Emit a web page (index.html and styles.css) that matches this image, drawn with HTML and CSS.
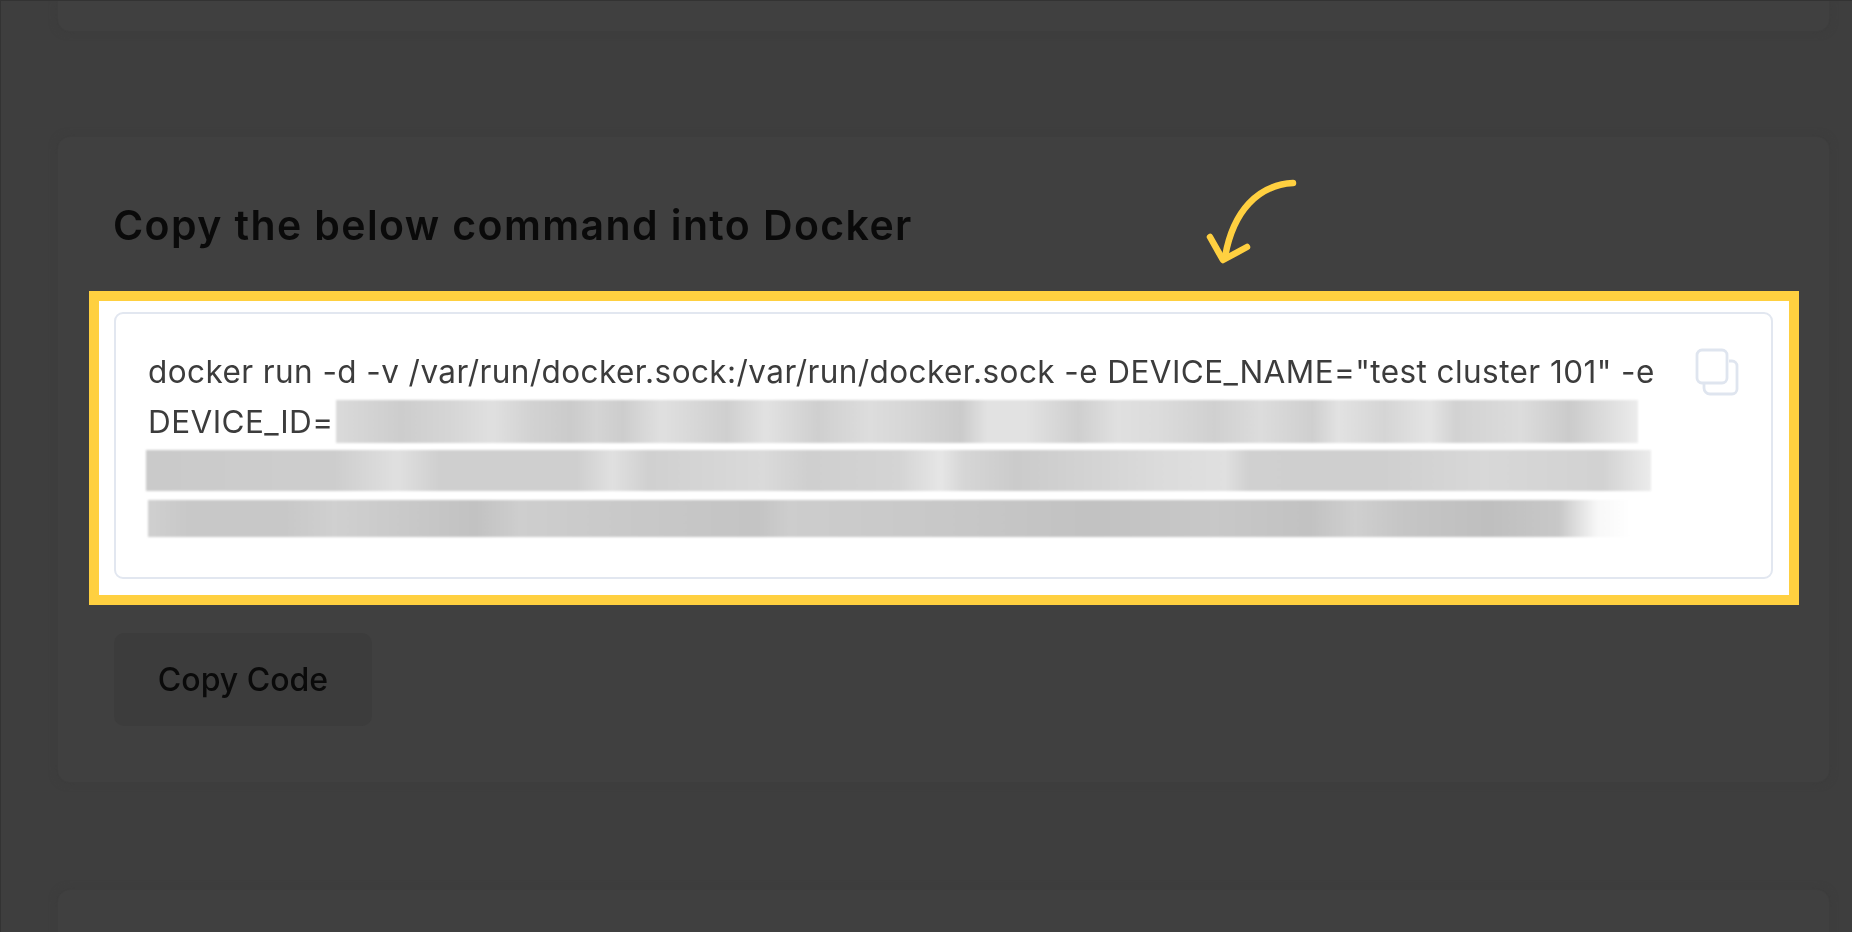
FILE: index.html
```html
<!DOCTYPE html>
<html lang="en">
<head>
<meta charset="utf-8">
<title>Copy the below command into Docker</title>
<link rel="stylesheet" href="styles.css">
</head>
<body>
<div class="page">
  <section class="card card-top"></section>
  <section class="card card-main">
    <h2 class="heading">Copy the below command into Docker</h2>
    <div class="highlight">
      <div class="code-box">
        <div class="code-lines">
          <div class="code-line">docker run -d -v /var/run/docker.sock:/var/run/docker.sock -e DEVICE_NAME="test cluster 101" -e</div>
          <div class="code-row">
            <span class="code-label">DEVICE_ID=</span>
            <span class="redact redact-a"></span>
          </div>
          <div class="redact redact-b"></div>
          <div class="redact redact-c"></div>
        </div>
        <svg class="copy-icon" width="44" height="48" viewBox="0 0 44 48" fill="none" stroke="#dfe5ef" stroke-width="2.8">
          <path d="M9 36v4a6 6 0 0 0 6 6h22a5 5 0 0 0 5-5V18a5 5 0 0 0-5-5h-3"/>
          <rect x="2" y="2" width="30" height="33" rx="5" fill="#fff"/>
        </svg>
      </div>
    </div>
    <button class="copy-button" type="button">Copy Code</button>
  </section>
  <section class="card card-bottom"></section>
  <svg class="arrow" width="100" height="100" viewBox="0 0 100 100" fill="none" stroke="#ffd040" stroke-width="6.5" stroke-linecap="round" stroke-linejoin="round">
    <path d="M93 8C58 10 33 36 25 82"/>
    <path d="M10 62L23 85L47 72"/>
  </svg>
</div>
</body>
</html>
```

FILE: styles.css
```css
* { box-sizing: border-box; }
html, body { margin: 0; padding: 0; height: 100%; overflow: hidden; background: #3e3e3e; }
.page {
  position: relative;
  width: 1852px;
  height: 932px;
  overflow: hidden;
  display: flex;
  flex-direction: column;
  padding: 0 23px 0 58px;
  background: #3e3e3e;
}
.page::after {
  content: "";
  position: absolute;
  inset: 0;
  box-shadow: inset 1px 1px 0 #333;
  pointer-events: none;
}
.card {
  flex: none;
  background: #404040;
  border-radius: 12px;
  box-shadow: 0 0 0 1px #3d3d3d, 0 0 8px #3c3c3c;
}
.card-top { height: 31px; border-radius: 0 0 12px 12px; }
.card-main {
  height: 645px;
  margin-top: 106px;
  padding: 64px 54px 0 55px;
  display: flex;
  flex-direction: column;
  align-items: flex-start;
}
.card-bottom { height: 60px; margin-top: 108px; }
.heading {
  margin: 0;
  height: 90px;
  font: 600 41px/48px "Inter", "Liberation Sans", sans-serif;
  letter-spacing: 1.4px;
  color: #0a0a0a;
  filter: blur(.7px);
}
.highlight {
  align-self: stretch;
  margin: 0 -24px 0 -24px;
  height: 314px;
  border: 10px solid #ffd040;
  background: #fff;
  padding: 11px 16px 16px 15px;
}
.code-box {
  height: 267px;
  border: 2.5px solid #e2e7f0;
  border-radius: 9px;
  padding: 33px 0 0 32px;
  display: flex;
  align-items: flex-start;
  background: #fff;
}
.code-lines {
  width: 1508px;
  flex: none;
  display: flex;
  flex-direction: column;
  align-items: flex-start;
  color: #3c3c3c;
  font: 400 31.5px/50px "Inter", "Liberation Sans", sans-serif;
  letter-spacing: 0.42px;
  filter: blur(.6px);
}
.code-line { white-space: nowrap; height: 53px; }
.code-row { display: flex; height: 50px; align-items: flex-start; }
.code-label { width: 188px; line-height: 44px; white-space: nowrap; }
.redact { display: block; filter: blur(.8px); }
.redact-a {
  width: 1302px;
  height: 43px;
  background: linear-gradient(90deg, #dadada 0, #cdcdcd 5%, #d6d6d6 9%, #e0e0e0 12%, #d2d2d2 15%, #cbcbcb 18%, #d4d4d4 20%, #cdcdcd 22%, #e0e0e0 25%, #cfcfcf 30%, #e2e2e2 33%, #cfcfcf 37%, #dddddd 41%, #d6d6d6 44%, #cbcbcb 48%, #e2e2e2 50%, #e2e2e2 53%, #cfcfcf 57%, #e0e0e0 60%, #dcdcdc 63%, #d0d0d0 67.5%, #dcdcdc 71%, #cfcfcf 75%, #e2e2e2 77%, #d5d5d5 80.5%, #e4e4e4 84%, #d2d2d2 86%, #dcdcdc 91%, #cbcbcb 94.7%, #ececec 100%);
}
.redact-b {
  width: 1505px;
  height: 41px;
  margin-left: -2px;
  background: linear-gradient(90deg, #cacaca 0, #cdcdcd 9%, #cdcdcd 12.5%, #e0e0e0 16.7%, #cfcfcf 19.5%, #cfcfcf 28.6%, #e0e0e0 31%, #d0d0d0 33.4%, #dadada 41%, #cfcfcf 44%, #d4d4d4 50%, #e6e6e6 52.8%, #d6d6d6 54.3%, #cbcbcb 57.8%, #dcdcdc 67.8%, #e0e0e0 71.7%, #d0d0d0 73.3%, #cfcfcf 82%, #d8d8d8 88.8%, #d2d2d2 96.8%, #ececec 100%);
}
.redact-c {
  width: 1490px;
  height: 37px;
  margin-top: 9px;
  background: linear-gradient(90deg, #d0d0d0 0, #c8c8c8 2.7%, #c8c8c8 9.2%, #d0d0d0 12.5%, #c2c2c2 22%, #cecece 25%, #c9c9c9 32%, #c4c4c4 41%, #cdcdcd 43%, #c8c8c8 53.7%, #c2c2c2 63.5%, #c8c8c8 71.6%, #c2c2c2 78%, #cfcfcf 81%, #c6c6c6 84%, #bfbfbf 90%, #c8c8c8 94.7%, #f8f8f8 97.3%, #fff 99.5%);
}
.copy-icon { flex: none; margin: 1px 0 0 39px; filter: blur(.4px); }
.copy-button {
  margin: 28px 0 0 1px;
  width: 258px;
  height: 93px;
  border: 0;
  border-radius: 10px;
  background: #3c3c3c;
  color: #0a0a0a;
  font: 500 32px/38px "Inter", "Liberation Sans", sans-serif;
  filter: blur(.6px);
  padding: 0;
}
.arrow { position: absolute; left: 1200px; top: 175px; }
```
